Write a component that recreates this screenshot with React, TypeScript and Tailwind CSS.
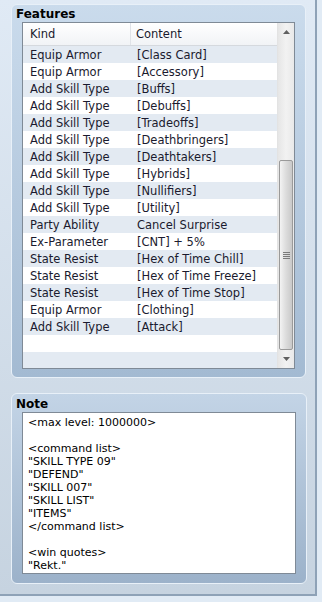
import React from 'react';

const rows: [string, string][] = [
  ['Equip Armor', '[Class Card]'],
  ['Equip Armor', '[Accessory]'],
  ['Add Skill Type', '[Buffs]'],
  ['Add Skill Type', '[Debuffs]'],
  ['Add Skill Type', '[Tradeoffs]'],
  ['Add Skill Type', '[Deathbringers]'],
  ['Add Skill Type', '[Deathtakers]'],
  ['Add Skill Type', '[Hybrids]'],
  ['Add Skill Type', '[Nullifiers]'],
  ['Add Skill Type', '[Utility]'],
  ['Party Ability', 'Cancel Surprise'],
  ['Ex-Parameter', '[CNT] + 5%'],
  ['State Resist', '[Hex of Time Chill]'],
  ['State Resist', '[Hex of Time Freeze]'],
  ['State Resist', '[Hex of Time Stop]'],
  ['Equip Armor', '[Clothing]'],
  ['Add Skill Type', '[Attack]'],
  ['', ''],
  ['', ''],
];

const noteLines = [
  '<max level: 1000000>',
  '',
  '<command list>',
  '"SKILL TYPE 09"',
  '"DEFEND"',
  '"SKILL 007"',
  '"SKILL LIST"',
  '"ITEMS"',
  '</command list>',
  '',
  '<win quotes>',
  '"Rekt."',
];

const Scrollbar: React.FC = () => (
  <div className="w-[17px] flex flex-col bg-gradient-to-r from-[#e6e6e6] via-[#f2f2f2] to-[#e9e9e9] border-l border-[#e3e3e3]">
    <div className="h-[17px] flex items-center justify-center">
      <svg width="7" height="4" viewBox="0 0 7 4">
        <path d="M0 4 L3.5 0 L7 4 Z" fill="#606060" />
      </svg>
    </div>
    <div className="h-[120px]" />
    <div className="h-[190px] mx-[1px] rounded-[2px] border border-[#9a9a9a] bg-gradient-to-r from-[#f3f3f3] via-[#dcdcdc] to-[#c9c9c9] flex items-center justify-center">
      <div className="flex flex-col gap-[1px]">
        <div className="w-[7px] h-[1px] bg-[#7a7a7a]" />
        <div className="w-[7px] h-[1px] bg-[#7a7a7a]" />
        <div className="w-[7px] h-[1px] bg-[#7a7a7a]" />
        <div className="w-[7px] h-[1px] bg-[#7a7a7a]" />
      </div>
    </div>
    <div className="flex-1 flex items-center justify-center">
      <svg width="7" height="4" viewBox="0 0 7 4">
        <path d="M0 0 L3.5 4 L7 0 Z" fill="#606060" />
      </svg>
    </div>
  </div>
);

export default function App() {
  return (
    <div className="w-[322px] h-[602px] bg-[#e1ebf5] font-['DejaVu_Sans',sans-serif]">
      <div className="w-[317px] h-[596px] border-r-2 border-b-2 border-[#8ea2b7] bg-gradient-to-b from-[#e0eaf5] to-[#c6d3e0] pt-[4px] pl-[11px]">
        {/* Features */}
        <div className="w-[295px] h-[374px] rounded-[6px] border border-[#e8f0f8] bg-gradient-to-b from-[#cadbec] to-[#a3bad2] px-[10px] pt-[1px]">
          <div className="h-[16px] text-[12px] font-bold leading-[16px] text-black -ml-[6px]">
            Features
          </div>
          <div className="h-[347px] border border-[#7f8a96] bg-white flex text-[11.5px] text-[#1a1a2e]">
            <div className="flex-1 flex flex-col overflow-hidden">
              <div className="h-[24px] flex items-center bg-gradient-to-b from-white to-[#f1f3f6] border-b border-[#d5d9de]">
                <div className="w-[108px] pl-[7px] pt-[2px] border-r border-[#e0e3e8] h-full flex items-center">Kind</div>
                <div className="pl-[5px] pt-[2px]">Content</div>
              </div>
              {rows.map((r, i) => (
                <div
                  key={i}
                  className={`h-[17px] flex pt-[2px] leading-[15px] ${i % 2 === 0 ? 'bg-[#e3eaf2]' : 'bg-white'}`}
                >
                  <div className="w-[108px] pl-[7px] whitespace-nowrap">{r[0]}</div>
                  <div className="pl-[6px] whitespace-nowrap">{r[1]}</div>
                </div>
              ))}
            </div>
            <Scrollbar />
          </div>
        </div>

        {/* Note */}
        <div className="mt-[15px] w-[296px] h-[191px] rounded-[6px] border border-[#e8f0f8] bg-gradient-to-b from-[#c3d4e6] to-[#9cb2ca] px-[10px] pt-[2px]">
          <div className="h-[16px] text-[12px] font-bold leading-[16px] text-black -ml-[6px]">
            Note
          </div>
          <div className="h-[162px] border border-[#7f8a96] bg-white px-[5px] pt-[3px] text-[11px] leading-[13px] text-black">
            {noteLines.map((l, i) => (
              <div key={i} className="h-[13px] whitespace-pre">
                {l}
              </div>
            ))}
          </div>
        </div>
      </div>
    </div>
  );
}
